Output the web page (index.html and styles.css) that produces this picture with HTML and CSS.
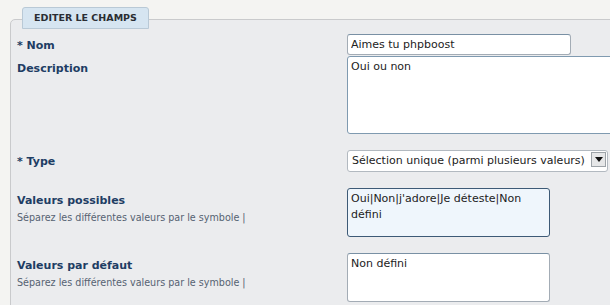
FILE: index.html
```html
<!DOCTYPE html>
<html lang="fr">
<head>
  <meta charset="UTF-8" />
  <title>Editer le champs</title>
  <link rel="stylesheet" href="styles.css">
</head>
<body>

  <form class="fieldset">
    <div class="legend">Editer le champs</div>

    <div class="row row-tight">
      <label class="label" for="nom">* Nom</label>
      <div class="field"><input type="text" id="nom" class="input" value="Aimes tu phpboost"></div>
    </div>

    <div class="row row-desc">
      <label class="label" for="desc">Description</label>
      <div class="field"><textarea id="desc" class="area area-wide">Oui ou non</textarea></div>
    </div>

    <div class="row">
      <label class="label" for="type">* Type</label>
      <div class="field">
        <div class="select-wrap">
          <select id="type" class="select">
            <option>Sélection unique (parmi plusieurs valeurs)</option>
          </select>
          <span class="select-arrow"></span>
        </div>
      </div>
    </div>

    <div class="row">
      <div class="label">
        <label for="possibles">Valeurs possibles</label>
        <span class="hint">Séparez les différentes valeurs par le symbole |</span>
      </div>
      <div class="field"><textarea id="possibles" class="area area-focus">Oui|Non|j'adore|Je déteste|Non défini</textarea></div>
    </div>

    <div class="row">
      <div class="label">
        <label for="defaut">Valeurs par défaut</label>
        <span class="hint">Séparez les différentes valeurs par le symbole |</span>
      </div>
      <div class="field"><textarea id="defaut" class="area">Non défini</textarea></div>
    </div>
  </form>

</body>
</html>
```

FILE: styles.css
```css
body {
  margin: 0;
  background: #f4f4f2;
  font-family: "DejaVu Sans", Verdana, sans-serif;
  overflow: hidden;
  height: 305px;
}
.fieldset {
  margin: 19px 0 0 10px;
  width: 640px;
  height: 320px;
  background: #ebecee;
  border: 1px solid #c9cacc;
  border-radius: 5px 0 0 0;
}
.legend {
  display: block;
  width: fit-content;
  margin: -13px 0 0 11px;
  padding: 0 11px;
  height: 20px;
  line-height: 20px;
  background: #d6e5f1;
  border: 1px solid #b9c9d6;
  border-radius: 3px 3px 0 0;
  font-size: 9.5px;
  font-weight: 700;
  text-transform: uppercase;
  color: #2a2d33;
}
.row {
  display: flex;
  align-items: flex-start;
  margin-bottom: 16px;
}
.row-tight {
  margin-top: 4px;
  margin-bottom: 1px;
}
.row-desc {
  margin-bottom: 15px;
}
.label {
  width: 336px;
  padding: 6px 0 0 6px;
  box-sizing: border-box;
  font-size: 11px;
  line-height: 14px;
  font-weight: 700;
  color: #1e3d64;
}
.hint {
  display: block;
  margin-top: 3px;
  font-size: 9.6px;
  font-weight: 400;
  color: #566272;
}
.input, .area, .select {
  font-family: "DejaVu Sans", Verdana, sans-serif;
  font-size: 11px;
  color: #222;
  background: #fff;
  border: 1px solid #a3acb5;
  border-top-color: #7990a4;
  border-radius: 3px;
  box-sizing: border-box;
  margin: 0;
}
.input {
  width: 224px;
  height: 21px;
  padding: 1px 3px;
}
.area {
  display: block;
  width: 203px;
  height: 49px;
  padding: 2px 3px;
  resize: none;
  line-height: 16px;
}
.area-wide {
  width: 280px;
  height: 78px;
  border-color: #7f9ab0;
}
.area-focus {
  background: #eff6fc;
  border-color: #3d5a76;
}
.select-wrap {
  position: relative;
  width: 261px;
}
.select {
  appearance: none;
  width: 261px;
  height: 22px;
  padding: 0 4px;
  border-color: #b2b9c0;
}
.select-arrow {
  position: absolute;
  right: 2px;
  top: 3px;
  width: 15px;
  height: 15px;
  box-sizing: border-box;
  background: #e6e7e8;
  border: 1px solid #9da3a8;
  pointer-events: none;
}
.select-arrow::after {
  content: "";
  position: absolute;
  left: 3px;
  top: 4px;
  border-left: 4px solid transparent;
  border-right: 4px solid transparent;
  border-top: 5px solid #111;
}
```
